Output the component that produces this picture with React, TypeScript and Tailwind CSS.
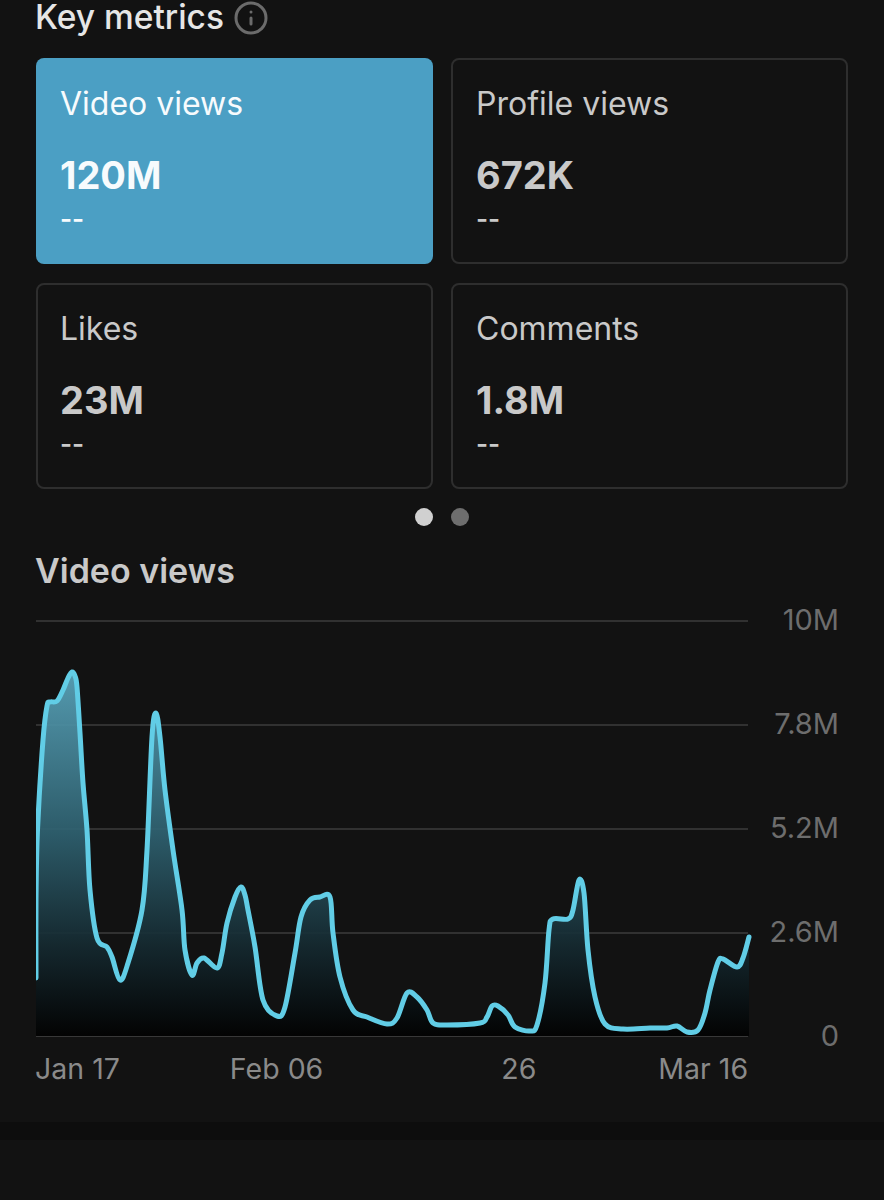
import { Info } from "lucide-react";

const points: [number, number][] = [
  [36, 978], [36, 900], [37.5, 830], [43, 740], [47, 706], [50, 702], [57, 701], [63, 690], [68, 678], [72, 672],
  [75, 676], [77, 687], [80, 733], [83, 783], [87, 830], [90, 890], [97, 938], [107, 947], [112, 957], [120, 980],
  [128, 963], [142, 910], [147, 850], [152, 737], [156, 713], [160, 737], [165, 790], [173, 850], [182, 910], [185, 950],
  [192, 975], [197, 963], [204, 958], [217, 968], [222, 953], [227, 923], [235, 897], [241, 887], [245, 895], [248, 910], [255, 947],
  [263, 1000], [277, 1016], [285, 1007], [295, 953], [301, 917], [310, 900], [320, 897], [330, 897], [333, 933], [340, 977],
  [353, 1010], [367, 1017], [387, 1024], [397, 1018], [407, 993], [417, 997], [427, 1010], [433, 1023], [447, 1025],
  [480, 1023], [487, 1017], [492, 1006], [498, 1006], [508, 1015], [515, 1027], [530, 1031], [537, 1025], [545, 983],
  [549, 930], [553, 919], [568, 919], [573, 910], [579, 880], [584, 893], [588, 950], [595, 997], [605, 1024],
  [623, 1029], [650, 1028], [667, 1028], [677, 1026], [687, 1032], [698, 1030], [705, 1013], [710, 990], [718, 962],
  [723, 959], [737, 967], [743, 958], [749, 937],
];

// catmull-rom through the traced points
function smooth(pts: [number, number][]) {
  let d = `M${pts[0][0]} ${pts[0][1]}`;
  for (let i = 0; i < pts.length - 1; i++) {
    const p0 = pts[i - 1] ?? pts[i];
    const p1 = pts[i];
    const p2 = pts[i + 1];
    const p3 = pts[i + 2] ?? p2;
    const c1x = p1[0] + (p2[0] - p0[0]) / 6;
    const c1y = p1[1] + (p2[1] - p0[1]) / 6;
    const c2x = p2[0] - (p3[0] - p1[0]) / 6;
    const c2y = p2[1] - (p3[1] - p1[1]) / 6;
    d += ` C${c1x.toFixed(1)} ${c1y.toFixed(1)} ${c2x.toFixed(1)} ${c2y.toFixed(1)} ${p2[0]} ${p2[1]}`;
  }
  return d;
}

const line = smooth(points);
const metrics = [
  { label: "Video views", value: "120M", tone: "h-[206px] rounded-[8px] bg-[#4b9fc4] pl-[24px] pt-[26px] text-[#f7fbfd]" },
  { label: "Profile views", value: "672K", tone: "h-[206px] rounded-[8px] border-2 border-[#2e2e2e] pl-[23px] pt-[24px] text-[#c9c9c9]" },
  { label: "Likes", value: "23M", tone: "h-[206px] rounded-[8px] border-2 border-[#2e2e2e] pl-[22px] pt-[24px] text-[#c9c9c9]" },
  { label: "Comments", value: "1.8M", tone: "h-[206px] rounded-[8px] border-2 border-[#2e2e2e] pl-[23px] pt-[24px] text-[#c9c9c9]" },
];

function MetricCard({ label, value, tone }: { label: string; value: string; tone: string }) {
  return (
    <div className={tone}>
      <div className="h-[40px] text-[32px] leading-[40px]">{label}</div>
      <div className="mt-[27px] h-[48px] text-[38px] font-bold leading-[48px]">{value}</div>
      <div className="mt-[2px] h-[36px] text-[26px] font-semibold leading-[36px]">--</div>
    </div>
  );
}

function Chart() {
  return (
    <svg viewBox="36 610 716 435" className="h-[435px] w-[716px] shrink-0" fill="none">
      <defs>
        <linearGradient id="area" gradientUnits="userSpaceOnUse" x1="0" y1="672" x2="0" y2="1036">
          <stop offset="0" stopColor="#5aa6bd" />
          <stop offset="0.45" stopColor="#2e606f" />
          <stop offset="0.75" stopColor="#152a31" />
          <stop offset="1" stopColor="#020202" />
        </linearGradient>
      </defs>
      {[621, 725, 829, 933].map((y) => (
        <line key={y} x1="36" x2="748" y1={y} y2={y} stroke="#505050" strokeWidth="1.2" />
      ))}
      <path d={`${line} L749 1036 L36 1036 Z`} fill="url(#area)" fillOpacity="0.92" />
      <line x1="36" x2="748" y1="1036.5" y2="1036.5" stroke="#383838" strokeWidth="1.2" />
      <path d={line} stroke="#61cde6" strokeWidth="5" strokeLinecap="round" strokeLinejoin="round" />
    </svg>
  );
}

export default function App() {
  return (
    <div className="h-[1200px] w-[884px] overflow-hidden bg-[#121212] font-[Inter,sans-serif]">
      <div className="px-[36px]">
        <div className="flex h-[58px] items-start gap-[9px] text-[#e6e6e6]">
          <span className="ml-[-1px] text-[33.5px] font-medium leading-[34px]">Key metrics</span>
          <Info className="h-[36px] w-[36px] text-[#6b6b6b]" strokeWidth={2} />
        </div>
        <div className="grid grid-cols-2 gap-x-[18px] gap-y-[19px]">
          {metrics.map((m) => (
            <MetricCard key={m.label} {...m} />
          ))}
        </div>
        <div className="mt-[19px] flex h-[18px] justify-center gap-[18px]">
          <span className="h-[18px] w-[18px] rounded-full bg-[#d0d0d0]" />
          <span className="h-[18px] w-[18px] rounded-full bg-[#6e6e6e]" />
        </div>
        <div className="ml-[-1px] mt-[24px] h-[42px] text-[34px] font-semibold leading-[42px] text-[#c9c9c9]">Video views</div>
      </div>
      <div className="mt-[18px] flex pl-[36px]">
        <Chart />
        <div className="mt-[-5px] flex h-[446px] w-[87px] flex-col items-end justify-between text-[29px] leading-[30px] text-[#6d6d6d]">
          <span>10M</span>
          <span>7.8M</span>
          <span>5.2M</span>
          <span>2.6M</span>
          <span>0</span>
        </div>
      </div>
      <div className="flex h-[36px] pl-[35px] text-[28.5px] leading-[36px] text-[#8a8a8a]">
        <span>Jan 17</span>
        <span className="ml-[110px]">Feb 06</span>
        <span className="ml-[178px]">26</span>
        <span className="ml-[122px]">Mar 16</span>
      </div>
      <div className="mt-[35px] h-[18px] bg-[#0d0d0d]" />
    </div>
  );
}
